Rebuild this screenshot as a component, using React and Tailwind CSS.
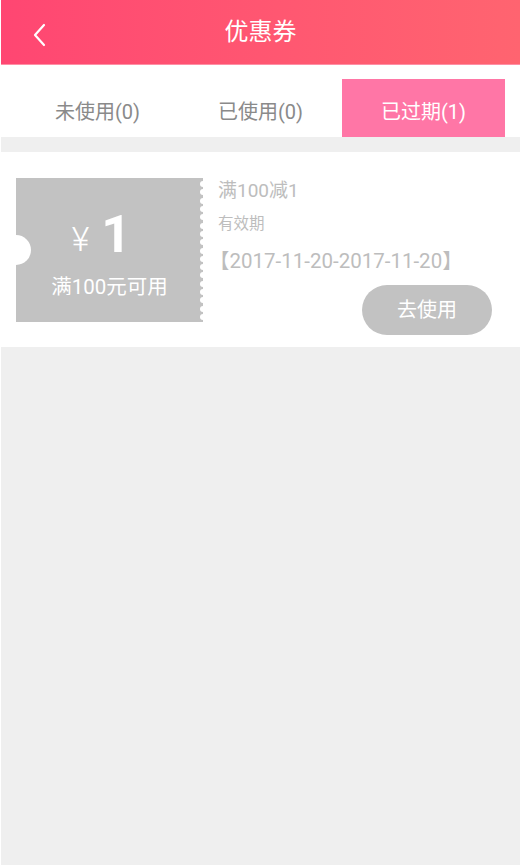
import React, { useState } from 'react';

const tabs = [
    { key: 'unused', label: '未使用(0)' },
    { key: 'used', label: '已使用(0)' },
    { key: 'expired', label: '已过期(1)' },
];

const CouponTicket = () => (
    <div className="relative w-[187px] h-[144px] bg-[#c2c2c2] flex flex-col items-center justify-center text-white">
        {/* left notch */}
        <div className="absolute left-[-15px] top-[57px] w-[30px] h-[30px] rounded-full bg-white" />
        {/* scalloped right edge */}
        <div className="absolute right-[-3px] top-[1px] bottom-0 flex flex-col justify-between py-[2px]">
            {Array.from({ length: 17 }).map((_, i) => (
                <span key={i} className="block w-[6px] h-[6px] rounded-full bg-white" />
            ))}
        </div>
        <div className="flex items-end leading-none mt-[6px] mr-[16px]">
            <span className="text-[34px] mr-[12px] mb-[5px] font-light">¥</span>
            <span className="text-[52px] font-bold">1</span>
        </div>
        <div className="text-[20.5px] mt-[16px] leading-none">满100元可用</div>
    </div>
);

const App = () => {
    const [active, setActive] = useState('expired');

    return (
        <div
            className="min-h-[865px] bg-white px-[1px] flex flex-col"
            style={{ fontFamily: '"Roboto", "Noto Sans CJK SC", sans-serif' }}
        >
            <div className="h-[65px] bg-gradient-to-r from-[#ff4672] to-[#ff6470] border-b border-[#ff8fa5] flex items-center relative">
                <button className="absolute left-[28px] top-[22px] w-[20px] h-[26px] flex items-center justify-center">
                    <svg width="14" height="24" viewBox="0 0 14 24" fill="none">
                        <path d="M12 2 L3 12 L12 22" stroke="white" strokeWidth="2.2" strokeLinecap="round" strokeLinejoin="round" />
                    </svg>
                </button>
                <h1 className="flex-1 text-center text-white text-[24px] leading-none">优惠券</h1>
            </div>

            <div className="bg-white h-[72px] px-[15px] pt-[14px] grid grid-cols-3">
                {tabs.map(tab => (
                    <div
                        key={tab.key}
                        onClick={() => setActive(tab.key)}
                        className={`flex items-center justify-center pt-[8px] text-[20px] cursor-pointer ${
                            active === tab.key ? 'bg-[#ff76a6] text-white' : 'text-[#8a8a8a]'
                        }`}
                    >
                        {tab.label}
                    </div>
                ))}
            </div>

            <div className="flex-1 bg-[#efefef] pt-[15px]">
                <div className="bg-white h-[195px] pl-[15px] pr-[28px] pt-[26px] flex">
                    <CouponTicket />
                    <div className="flex-1 pl-[10px] flex flex-col">
                        <div className="text-[19px] text-[#bdbdbd] pl-[5px] leading-none mt-[3px]">满100减1</div>
                        <div className="text-[15.5px] text-[#bdbdbd] pl-[5px] leading-none mt-[17px]">有效期</div>
                        <div className="text-[20.5px] text-[#bdbdbd] leading-none mt-[18px] ml-[-4px]">【2017-11-20-2017-11-20】</div>
                        <div className="flex justify-end mt-[14px]">
                            <button className="w-[130px] h-[50px] rounded-full bg-[#c2c2c2] text-white text-[20px]">
                                去使用
                            </button>
                        </div>
                    </div>
                </div>
            </div>
        </div>
    );
};

export default App;
